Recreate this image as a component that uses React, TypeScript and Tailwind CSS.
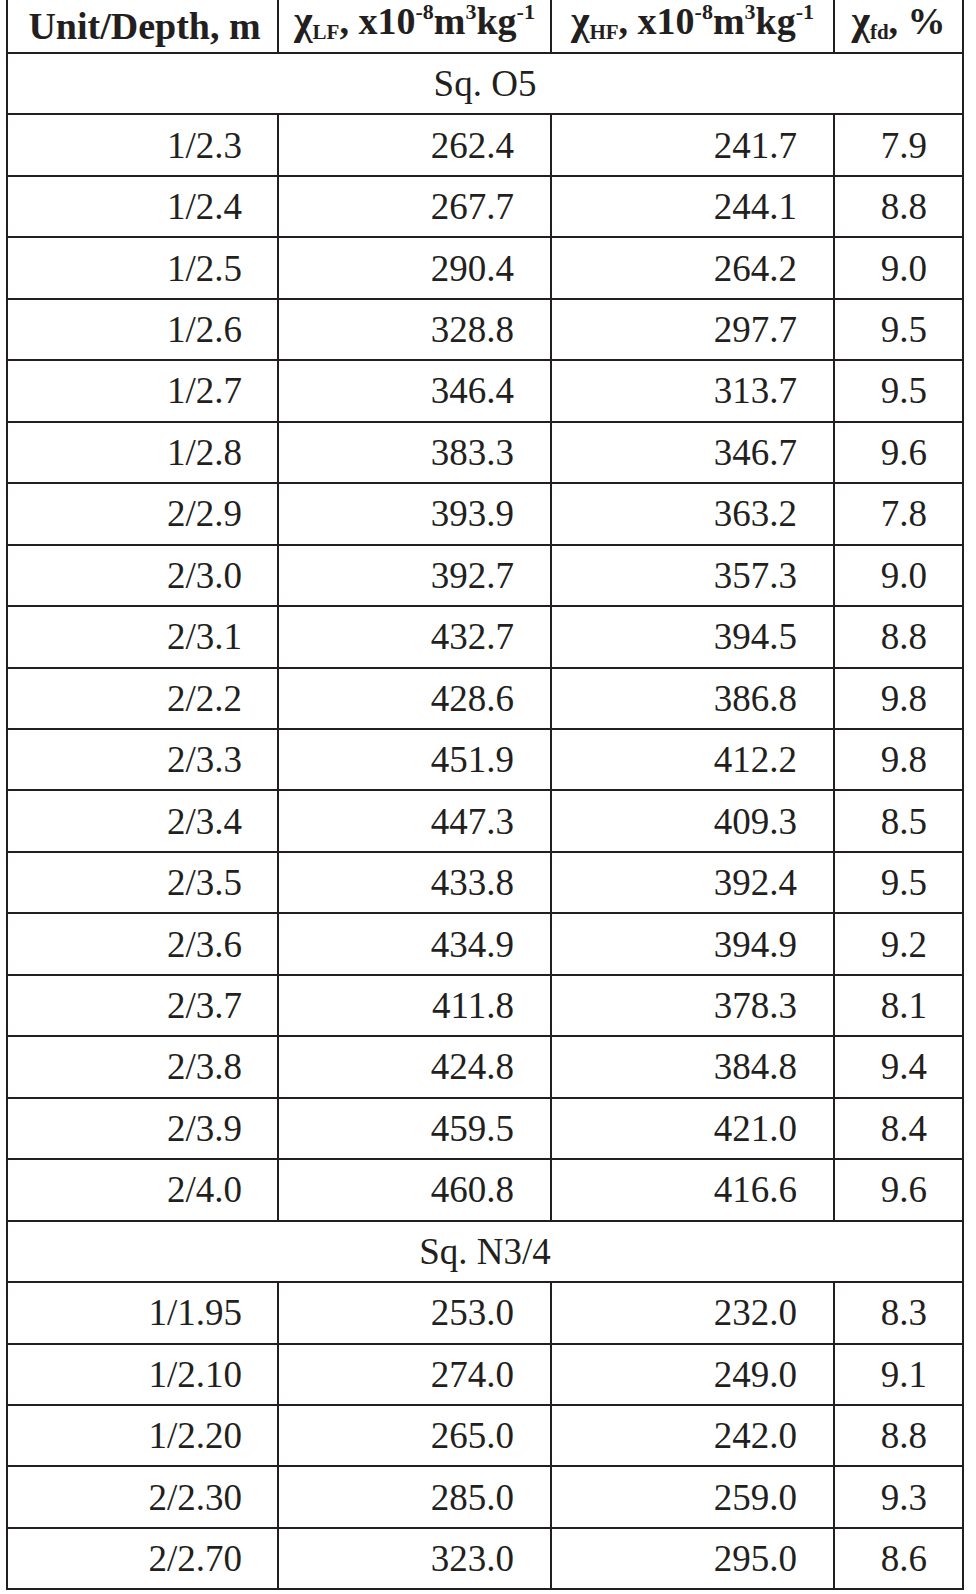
const SQ_O5: string[][] = [
  ['1/2.3', '262.4', '241.7', '7.9'],
  ['1/2.4', '267.7', '244.1', '8.8'],
  ['1/2.5', '290.4', '264.2', '9.0'],
  ['1/2.6', '328.8', '297.7', '9.5'],
  ['1/2.7', '346.4', '313.7', '9.5'],
  ['1/2.8', '383.3', '346.7', '9.6'],
  ['2/2.9', '393.9', '363.2', '7.8'],
  ['2/3.0', '392.7', '357.3', '9.0'],
  ['2/3.1', '432.7', '394.5', '8.8'],
  ['2/2.2', '428.6', '386.8', '9.8'],
  ['2/3.3', '451.9', '412.2', '9.8'],
  ['2/3.4', '447.3', '409.3', '8.5'],
  ['2/3.5', '433.8', '392.4', '9.5'],
  ['2/3.6', '434.9', '394.9', '9.2'],
  ['2/3.7', '411.8', '378.3', '8.1'],
  ['2/3.8', '424.8', '384.8', '9.4'],
  ['2/3.9', '459.5', '421.0', '8.4'],
  ['2/4.0', '460.8', '416.6', '9.6'],
];

const SQ_N34: string[][] = [
  ['1/1.95', '253.0', '232.0', '8.3'],
  ['1/2.10', '274.0', '249.0', '9.1'],
  ['1/2.20', '265.0', '242.0', '8.8'],
  ['2/2.30', '285.0', '259.0', '9.3'],
  ['2/2.70', '323.0', '295.0', '8.6'],
];

// widths include the 2px right rule of each cell
const COLS = ['w-[271px] pr-[35px]', 'w-[273px] pr-[36px]', 'w-[283px] pr-[36px]', 'w-[127px] pr-[35px]'];

function Sub({ children }: { children: string }) {
  return <span className="text-[21px] align-[-5px]">{children}</span>;
}

function Sup({ children }: { children: string }) {
  return <span className="text-[22px] align-[15px] leading-none">{children}</span>;
}

function DataRow({ cells }: { cells: string[] }) {
  return (
    <div className="flex h-[61.46px] border-b-2 border-[#231f20]">
      {cells.map((c, i) => (
        <div
          key={i}
          className={`${COLS[i]} flex items-center justify-end ${i < 3 ? 'border-r-2 border-[#231f20]' : ''}`}
        >
          {c}
        </div>
      ))}
    </div>
  );
}

function SectionRow({ label }: { label: string }) {
  return (
    <div className="flex h-[61.46px] items-center justify-center border-b-2 border-[#231f20]">{label}</div>
  );
}

export default function App() {
  return (
    <div className="min-h-[1594px] bg-white text-[#231f20] font-['Liberation_Serif','Times_New_Roman',serif] text-[37px] leading-[41px]">
      <div className="ml-[6px] w-[958px] border-x-2 border-[#231f20]">
        <div className="flex h-[54px] border-b-2 border-[#231f20] font-bold text-[38px]">
          <div className="w-[271px] flex items-center justify-center pt-[1px] pl-[4px] border-r-2 border-[#231f20]">
            Unit/Depth, m
          </div>
          <div className="w-[273px] flex items-center justify-center pt-[1px] border-r-2 border-[#231f20] whitespace-nowrap">
            <span>
              <span className="text-[40px]">χ</span>
              <Sub>LF</Sub>, x10<Sup>-8</Sup>m<Sup>3</Sup>kg<Sup>-1</Sup>
            </span>
          </div>
          <div className="w-[283px] flex items-center justify-center pt-[1px] border-r-2 border-[#231f20] whitespace-nowrap">
            <span>
              <span className="text-[40px]">χ</span>
              <Sub>HF</Sub>, x10<Sup>-8</Sup>m<Sup>3</Sup>kg<Sup>-1</Sup>
            </span>
          </div>
          <div className="w-[127px] flex items-center justify-center pt-[1px] whitespace-nowrap">
            <span>
              <span className="text-[40px]">χ</span>
              <Sub>fd</Sub>, %
            </span>
          </div>
        </div>
        <SectionRow label="Sq. O5" />
        {SQ_O5.map((r) => (
          <DataRow key={r[0]} cells={r} />
        ))}
        <SectionRow label="Sq. N3/4" />
        {SQ_N34.map((r) => (
          <DataRow key={r[0]} cells={r} />
        ))}
      </div>
    </div>
  );
}
